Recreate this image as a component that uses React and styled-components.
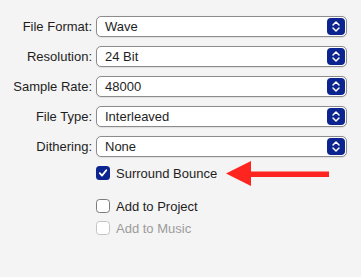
import React from "react";
import styled, { createGlobalStyle } from "styled-components";

const Global = createGlobalStyle`
  html, body { margin: 0; padding: 0; background: #f4f4f4; }
  body { font-family: "Liberation Sans", Arial, sans-serif; font-size: 13px; color: #1e1e1e; }
`;

const Page = styled.div`
  position: relative;
  width: 361px;
  height: 277px;
  box-sizing: border-box;
  padding: 16px 0 0 0;
  background: #f4f4f4;
`;

const Form = styled.div`
  display: grid;
  grid-template-columns: 92px 251px;
  column-gap: 4px;
  row-gap: 9px;
  align-items: center;
`;

const Label = styled.label`
  text-align: right;
  white-space: nowrap;
  line-height: 21px;
`;

const Select = styled.div`
  position: relative;
  height: 21px;
  box-sizing: border-box;
  border: 1px solid #8c8c8c;
  border-radius: 5px;
  background: #fff;
  display: flex;
  align-items: center;
  justify-content: space-between;
  padding: 0 1px 0 8px;
  box-shadow: 0 0.5px 1px rgba(0,0,0,0.08);
`;

const Value = styled.span`
  line-height: 19px;
`;

const Stepper = styled.span`
  width: 18px;
  height: 17px;
  border-radius: 4px;
  background: #0c2490;
  display: flex;
  align-items: center;
  justify-content: center;
`;

const Checks = styled.div`
  display: flex;
  flex-direction: column;
  padding-left: 96px;
  margin-top: 9px;
`;

const CheckRow = styled.div`
  display: flex;
  align-items: center;
  gap: 6px;
  height: 14px;
  margin-top: ${p => p.$gap || 0}px;
  color: ${p => (p.$disabled ? "#9b9b9b" : "#1e1e1e")};
`;

const Box = styled.span`
  width: 14px;
  height: 14px;
  box-sizing: border-box;
  border-radius: 3.5px;
  display: flex;
  align-items: center;
  justify-content: center;
  background: ${p => (p.$checked ? "#0c2490" : "#fff")};
  border: ${p => (p.$checked ? "none" : p.$disabled ? "1px solid #c4c4c4" : "1px solid #7a7a7a")};
`;

const Arrow = styled.svg`
  position: absolute;
  left: 226px;
  top: 161px;
`;

function StepIcon() {
  return (
    <svg width="10" height="13" viewBox="0 0 10 13">
      <path d="M2 5 L5 2 L8 5" fill="none" stroke="#fff" strokeWidth="1.5" strokeLinecap="round" strokeLinejoin="round" />
      <path d="M2 8 L5 11 L8 8" fill="none" stroke="#fff" strokeWidth="1.5" strokeLinecap="round" strokeLinejoin="round" />
    </svg>
  );
}

const rows = [
  ["File Format:", "Wave"],
  ["Resolution:", "24 Bit"],
  ["Sample Rate:", "48000"],
  ["File Type:", "Interleaved"],
  ["Dithering:", "None"],
];

export default function App() {
  return (
    <Page>
      <Global />
      <Form>
        {rows.map(([l, v]) => (
          <React.Fragment key={l}>
            <Label>{l}</Label>
            <Select>
              <Value>{v}</Value>
              <Stepper><StepIcon /></Stepper>
            </Select>
          </React.Fragment>
        ))}
      </Form>
      <Checks>
        <CheckRow>
          <Box $checked>
            <svg width="10" height="10" viewBox="0 0 10 10">
              <path d="M1.8 5.2 L4 7.6 L8.3 2.2" fill="none" stroke="#fff" strokeWidth="1.8" strokeLinecap="round" strokeLinejoin="round" />
            </svg>
          </Box>
          <span>Surround Bounce</span>
        </CheckRow>
        <CheckRow $gap={19}>
          <Box />
          <span>Add to Project</span>
        </CheckRow>
        <CheckRow $gap={8} $disabled>
          <Box $disabled />
          <span>Add to Music</span>
        </CheckRow>
      </Checks>
      <Arrow width="104" height="26" viewBox="0 0 104 26">
        <polygon points="0,12.5 25,0 25,25" fill="#fe2521" />
        <rect x="24" y="10.5" width="79" height="5.5" fill="#fe2521" />
      </Arrow>
    </Page>
  );
}
